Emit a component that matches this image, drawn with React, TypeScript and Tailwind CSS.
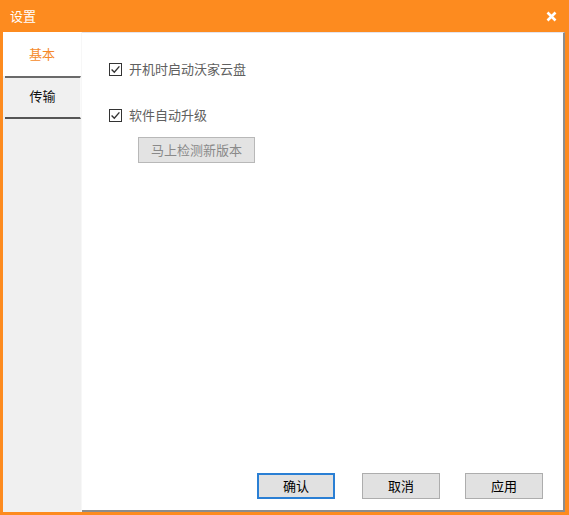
import React from "react";

const font = { fontFamily: '"Microsoft YaHei", "Noto Sans CJK SC", "Noto Sans", sans-serif' };

function Check() {
  return (
    <span className="w-[13px] h-[13px] border border-[#333] bg-white flex items-center justify-center shrink-0">
      <svg width="11" height="11" viewBox="0 0 11 11">
        <path d="M1.6 5.6 L4.3 8.3 L9.4 2.4" fill="none" stroke="#333" strokeWidth="1.4" />
      </svg>
    </span>
  );
}

export default function App() {
  return (
    <div className="w-[569px] h-[515px] bg-[#fd8b1f] flex flex-col" style={font}>
      <div className="h-[32px] flex items-center justify-between pl-[10px] pr-[12px] text-white text-[13px] shrink-0">
        <span>设置</span>
        <svg width="11" height="11" viewBox="0 0 11 11">
          <path d="M1.5 1.5 L9.5 9.5 M9.5 1.5 L1.5 9.5" stroke="#fff" strokeWidth="2.6" strokeLinecap="butt" />
        </svg>
      </div>
      <div className="flex-1 flex ml-[3px] mr-[4px] mb-[3px] bg-[#f0f0f0]">
        <div className="w-[79px] flex flex-col border-r border-[#f7f7f7]">
          <div className="h-[44px] bg-white flex items-center justify-center text-[13px] text-[#f58a2a]">基本</div>
          <div className="h-[43px] ml-[2px] pb-[3px] border-t-2 border-[#6a6a6a] border-b-2 border-b-[#555] flex items-center justify-center text-[13px] text-[#111] border-r border-r-[#fafafa]">
            传输
          </div>
        </div>
        <div className="flex-1 bg-white border-t border-[#e4e4ec] border-r-2 border-r-[#8c8c8c] border-b-2 border-b-[#8c8c8c] flex flex-col pl-[27px]">
          <label className="flex items-center gap-[7px] mt-[28px] text-[13px] text-[#606060] h-[16px]">
            <Check />
            <span>开机时启动沃家云盘</span>
          </label>
          <label className="flex items-center gap-[7px] mt-[30px] text-[13px] text-[#606060] h-[16px]">
            <Check />
            <span>软件自动升级</span>
          </label>
          <div className="mt-[14px] ml-[29px] w-[117px] h-[26px] bg-[#e3e3e3] border border-[#b8b8b8] flex items-center justify-center text-[13px] text-[#8a8a8a]">
            马上检测新版本
          </div>
          <div className="flex-1" />
          <div className="flex justify-end pr-[20px] pb-[11px]">
            <div className="w-[78px] h-[26px] bg-[#e1e1e1] border-2 border-[#2a7fd4] flex items-center justify-center text-[13px] text-black">确认</div>
            <div className="ml-[27px] w-[78px] h-[26px] bg-[#e1e1e1] border border-[#adadad] flex items-center justify-center text-[13px] text-black">取消</div>
            <div className="ml-[25px] w-[78px] h-[26px] bg-[#e1e1e1] border border-[#adadad] flex items-center justify-center text-[13px] text-black">应用</div>
          </div>
        </div>
      </div>
    </div>
  );
}
